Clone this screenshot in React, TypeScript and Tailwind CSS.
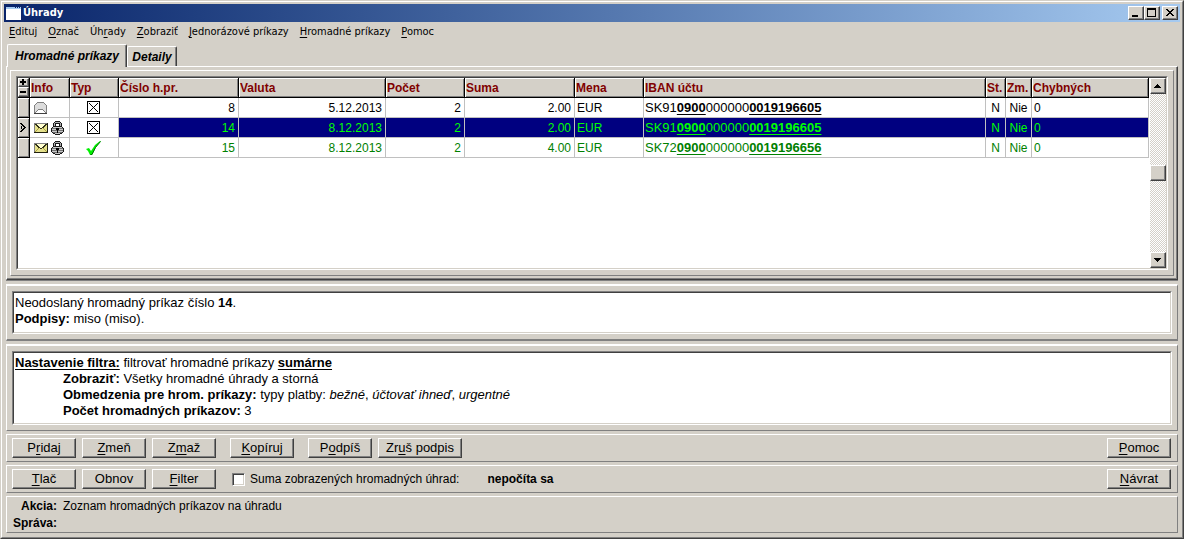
import type { ReactNode } from "react";

type PaymentRow = {
  id: number;
  state: "open" | "closed";
  type: "crossed" | "checked";
  date: string;
  count: number;
  amount: string;
  currency: string;
  iban: [string, string, string, string];
  status: string;
  changed: string;
  errors: number;
};

const ROWS: PaymentRow[] = [
  {
    id: 8,
    state: "open",
    type: "crossed",
    date: "5.12.2013",
    count: 2,
    amount: "2.00",
    currency: "EUR",
    iban: ["SK91", "0900", "000000", "0019196605"],
    status: "N",
    changed: "Nie",
    errors: 0,
  },
  {
    id: 14,
    state: "closed",
    type: "crossed",
    date: "8.12.2013",
    count: 2,
    amount: "2.00",
    currency: "EUR",
    iban: ["SK91", "0900", "000000", "0019196605"],
    status: "N",
    changed: "Nie",
    errors: 0,
  },
  {
    id: 15,
    state: "closed",
    type: "checked",
    date: "8.12.2013",
    count: 2,
    amount: "4.00",
    currency: "EUR",
    iban: ["SK72", "0900", "000000", "0019196656"],
    status: "N",
    changed: "Nie",
    errors: 0,
  },
];

const SELECTED_ID = 14;

const COLUMNS = [
  { label: "Info", width: "w-10" },
  { label: "Typ", width: "w-[49px]" },
  { label: "Číslo h.pr.", width: "w-[120px]" },
  { label: "Valuta", width: "w-[147px]" },
  { label: "Počet", width: "w-[79px]" },
  { label: "Suma", width: "w-[110px]" },
  { label: "Mena", width: "w-[69px]" },
  { label: "IBAN účtu", width: "" },
  { label: "St.", width: "w-5" },
  { label: "Zm.", width: "w-[26px]" },
  { label: "Chybných", width: "w-[117px]" },
];

// "_" in front of a letter marks the access key
const MENU = [
  "_Edituj",
  "_Označ",
  "Úh_rady",
  "_Zobraziť",
  "_Jednorázové príkazy",
  "_Hromadné príkazy",
  "_Pomoc",
];

const RAISED =
  "border border-t-white border-l-white border-r-[#404040] border-b-[#404040] bg-[#d4d0c8] shadow-[inset_-1px_-1px_0_#808080]";

function AccessLabel({ text }: { text: string }) {
  const at = text.indexOf("_");
  if (at < 0) return <>{text}</>;

  return (
    <>
      {text.slice(0, at)}
      <u className="underline-offset-2">{text[at + 1]}</u>
      {text.slice(at + 2)}
    </>
  );
}

function PushButton({ text, width = "w-16" }: { text: string; width?: string }) {
  return (
    <button
      type="button"
      className={`h-5 shrink-0 whitespace-nowrap text-center leading-4 ${width} ${RAISED}`}
    >
      <AccessLabel text={text} />
    </button>
  );
}

function Panel({ className = "", children }: { className?: string; children: ReactNode }) {
  return (
    <section
      className={`border border-t-white border-l-white border-r-[#808080] border-b-[#808080] ${className}`}
    >
      {children}
    </section>
  );
}

function Sunken({ className = "", children }: { className?: string; children: ReactNode }) {
  return (
    <div className={`border border-t-[#808080] border-l-[#808080] border-r-white border-b-white ${className}`}>
      <div className="h-full border border-t-[#404040] border-l-[#404040] border-r-[#d4d0c8] border-b-[#d4d0c8] bg-white">
        {children}
      </div>
    </div>
  );
}

function OpenEnvelope() {
  return (
    <svg width="13" height="12" viewBox="0 0 13 12" shapeRendering="crispEdges" aria-hidden>
      <path d="M3 1h7v1h1v1h1v8H1V3h1V2h1z" fill="#dcdcdc" />
      <path
        d="M3 .5h7M2 1.5h1M10 1.5h1M1 2.5h1M11 2.5h1M.5 3v8M12.5 3v8M4 7.5h5M3 8.5h1M9 8.5h1M2 9.5h1M10 9.5h1M1 10.5h1M11 10.5h1"
        stroke="#808080"
      />
      <path d="M4 8h5v1h1v1h1v1H2v-1h1V9h1z" fill="#fff" />
      <path d="M0 11.5h13" stroke="#404040" />
    </svg>
  );
}

function ClosedEnvelope() {
  return (
    <svg width="14" height="10" viewBox="0 0 14 10" shapeRendering="crispEdges" aria-hidden>
      <path d="M0 0h14v10H0z" fill="#808080" />
      <path d="M1 1h12v8H1z" fill="#e4e08c" />
      <path d="M3 1h8v1h-1v1H9v1H8v1H6V4H5V3H4V2H3z" fill="#ffffd0" />
      <path
        d="M1 1.5h2M2 2.5h2M3 3.5h2M4 4.5h2M8 4.5h2M6 5.5h2M9 3.5h2M10 2.5h2M11 1.5h2"
        stroke="#303018"
      />
      <path d="M4 5.5h1M3 6.5h1M2 7.5h1M1 8.5h1M9 5.5h1M10 6.5h1M11 7.5h1M12 8.5h1" stroke="#a8a040" />
      <path d="M13.5 0v10M0 9.5h14" stroke="#202010" />
    </svg>
  );
}

function Padlock() {
  return (
    <svg width="13" height="14" viewBox="0 0 13 14" shapeRendering="crispEdges" aria-hidden>
      <path d="M4 0h5v1h1v1h1v4H8V3H5v3H2V2h1V1h1z" fill="#181818" />
      <path d="M4 1h5v1h1v4H9V2H4v4H3V2h1z" fill="#b0b0b0" />
      <path d="M2 5h9v1h1v1h1v4h-1v1h-1v1H9v1H4v-1H2v-1H1v-1H0V7h1V6h1z" fill="#181818" />
      <path d="M2 6h9v1h1v4h-1v1H9v1H4v-1H2v-1H1V7h1z" fill="#c8c8c8" />
      <path d="M1 7.5h11M1 9.5h11M2 11.5h9" stroke="#707070" />
      <path d="M5 7h3v2H7v3H6V9H5z" fill="#000" />
    </svg>
  );
}

function CrossedBox() {
  return (
    <svg width="13" height="13" viewBox="0 0 13 13" shapeRendering="crispEdges" aria-hidden>
      <path d="M.5.5h12v12H.5zM2 2l9 9M11 2l-9 9" fill="none" stroke="#000" />
    </svg>
  );
}

function GreenCheck() {
  return (
    <svg width="15" height="14" viewBox="0 0 15 14" aria-hidden>
      <path d="M0 8l3-1 2 3 4-6 5-4h1l-5 6-4 8H4L2 10z" fill="#00f000" />
      <path d="M14.5.5l-5 6L6 13.5H4.5" fill="none" stroke="#007000" />
    </svg>
  );
}

function TitleBar() {
  return (
    <header className="flex h-[18px] items-center bg-linear-to-r from-[#0a246a] to-[#a6caf0] px-0.5">
      <svg width="15" height="13" viewBox="0 0 15 13" shapeRendering="crispEdges" aria-hidden>
        <path d="M0 0h15v13H0z" fill="#a6caf0" />
        <path d="M0 2h15v11H0z" fill="#fff" />
        <path d="M9 0h1v1H9zM11 0h1v1h-1zM13 0h1v1h-1z" fill="#0a246a" />
      </svg>
      <h1 className="ml-0.5 flex-1 font-['DejaVu_Sans_Condensed',sans-serif] text-[11px] leading-4 font-bold text-white">
        Úhrady
      </h1>
      <div className="flex">
        <button type="button" aria-label="Minimalizovať" className={`h-3.5 w-4 ${RAISED}`}>
          <svg width="14" height="12" viewBox="0 0 14 12" aria-hidden>
            <path d="M3 8h6v2H3z" />
          </svg>
        </button>
        <button type="button" aria-label="Maximalizovať" className={`h-3.5 w-4 ${RAISED}`}>
          <svg width="14" height="12" viewBox="0 0 14 12" aria-hidden>
            <path d="M2 1h9v9H2zM3 3v6h7V3z" fillRule="evenodd" />
          </svg>
        </button>
        <button type="button" aria-label="Zavrieť" className={`ml-0.5 h-3.5 w-4 ${RAISED}`}>
          <svg width="14" height="12" viewBox="0 0 14 12" shapeRendering="crispEdges" aria-hidden>
            <path d="M3 2h2v1h1v1h2V3h1V2h2v1h-1v1H9v1H8v1h1v1h1v1h1v1H9V8H8V7H6v1H5v1H3V8h1V7h1V6h1V5H5V4H4V3H3z" />
          </svg>
        </button>
      </div>
    </header>
  );
}

function TypeIcon({ type }: { type: PaymentRow["type"] }) {
  return type === "checked" ? <GreenCheck /> : <CrossedBox />;
}

function PaymentsTable() {
  return (
    <table className="w-full table-fixed border-separate border-spacing-0 text-[12px] leading-4">
      <thead>
        <tr className="h-5">
          <th className="w-3 border-r border-b border-black bg-[#d4d0c8] p-0">
            <button type="button" aria-label="Pridať stĺpec" className={`block h-[9px] w-[11px] ${RAISED}`}>
              <svg width="9" height="7" viewBox="0 0 9 7" className="block" aria-hidden>
                <path d="M1 2h6v2H1zM3 0h2v6H3z" />
              </svg>
            </button>
            <button type="button" aria-label="Odobrať stĺpec" className={`block h-2.5 w-[11px] ${RAISED}`}>
              <svg width="9" height="8" viewBox="0 0 9 8" className="block" aria-hidden>
                <path d="M1 3h6v2H1z" />
              </svg>
            </button>
          </th>
          {COLUMNS.map((column) => (
            <th
              key={column.label}
              className={`overflow-hidden border-r border-b border-black bg-[#d4d0c8] p-0 pl-px text-left font-bold whitespace-nowrap text-[#800000] shadow-[inset_1px_1px_0_#fff,inset_-1px_-1px_0_#808080] ${column.width}`}
            >
              {column.label}
            </th>
          ))}
        </tr>
      </thead>
      <tbody>
        {ROWS.map((row) => {
          const isSelected = row.id === SELECTED_ID;
          const tone = isSelected
            ? "bg-[#000080] text-[#00ff00]"
            : row.state === "closed"
              ? "text-[#008000]"
              : "text-black";
          const cell = `border-r border-b border-[#c0c0c0] p-0 whitespace-nowrap ${tone}`;
          const iconCell = "border-r border-b border-[#c0c0c0] p-0";

          return (
            <tr key={row.id} className="h-5" aria-selected={isSelected}>
              <th className="border-r border-b border-black bg-[#d4d0c8] p-0 shadow-[inset_1px_1px_0_#fff,inset_-1px_-1px_0_#808080]">
                {isSelected && (
                  <svg width="11" height="9" viewBox="0 0 11 9" className="block" shapeRendering="crispEdges" aria-hidden>
                    <path d="M2 0h2v1h1v1h1v1h1v1h1v1H7v1H6v1H5v1H4v1H2V8h1V7h1V6h1V5h1V4H5V3H4V2H3V1H2zM3 3h1v3H3z" />
                  </svg>
                )}
              </th>
              <td className={iconCell}>
                <div className="flex items-center gap-[3px] pl-1">
                  {row.state === "open" ? (
                    <OpenEnvelope />
                  ) : (
                    <>
                      <ClosedEnvelope />
                      <Padlock />
                    </>
                  )}
                </div>
              </td>
              <td className={iconCell}>
                <div className="flex justify-center pr-0.5">
                  <TypeIcon type={row.type} />
                </div>
              </td>
              <td className={`${cell} text-right`}>
                <span className="pr-[3px]">{row.id}</span>
              </td>
              <td className={`${cell} text-right`}>
                <span className="pr-[3px]">{row.date}</span>
              </td>
              <td className={`${cell} text-right`}>
                <span className="pr-[3px]">{row.count}</span>
              </td>
              <td className={`${cell} text-right`}>
                <span className="pr-[3px]">{row.amount}</span>
              </td>
              <td className={cell}>
                <span className="pl-0.5">{row.currency}</span>
              </td>
              <td className={`${cell} text-[13px]`}>
                <span className="pl-px">
                  {row.iban[0]}
                  <b className="underline underline-offset-2">{row.iban[1]}</b>
                  {row.iban[2]}
                  <b className="underline underline-offset-2">{row.iban[3]}</b>
                </span>
              </td>
              <td className={`${cell} text-center`}>{row.status}</td>
              <td className={`${cell} text-center`}>{row.changed}</td>
              <td className={cell}>
                <span className="pl-0.5">{row.errors}</span>
              </td>
            </tr>
          );
        })}
      </tbody>
    </table>
  );
}

function ScrollBar() {
  return (
    <div className="flex w-4 shrink-0 flex-col bg-[repeating-conic-gradient(#d4d0c8_0_25%,#fff_0_50%)] bg-[length:2px_2px]">
      <button type="button" aria-label="Nahor" className={`h-4 w-4 ${RAISED}`}>
        <svg width="14" height="14" viewBox="0 0 14 14" className="block" shapeRendering="crispEdges" aria-hidden>
          <path d="M6 5h1v1h1v1h1v1h1v1H3V8h1V7h1V6h1z" />
        </svg>
      </button>
      <div className="flex-1" />
      <div className={`h-4 w-4 ${RAISED}`} />
      <div className="h-[71px]" />
      <button type="button" aria-label="Nadol" className={`h-4 w-4 ${RAISED}`}>
        <svg width="14" height="14" viewBox="0 0 14 14" className="block" shapeRendering="crispEdges" aria-hidden>
          <path d="M3 5h7v1H9v1H8v1H7v1H6V8H5V7H4V6H3z" />
        </svg>
      </button>
    </div>
  );
}

export default function App() {
  return (
    <div className="border border-t-[#d4d0c8] border-l-[#d4d0c8] border-r-[#404040] border-b-[#404040] bg-[#d4d0c8] font-['Liberation_Sans',Arial,sans-serif] text-[12px] leading-4 text-black">
      <div className="border border-t-white border-l-white border-r-[#808080] border-b-[#808080] px-0.5 pt-0.5 pb-1">
        <TitleBar />

        <nav className="flex h-5 items-center gap-[11px] px-[5px] font-['DejaVu_Sans_Condensed',sans-serif] text-[11px]">
          {MENU.map((item) => (
            <button key={item} type="button" className="whitespace-nowrap">
              <AccessLabel text={item} />
            </button>
          ))}
        </nav>

        <main className="px-0.5 pt-0.5">
          <div role="tablist" className="flex items-end pl-px text-[12px] font-bold italic">
            <button
              type="button"
              role="tab"
              aria-selected="true"
              className="relative -mb-px h-[23px] w-[120px] rounded-t-xs border border-b-0 border-t-white border-l-white border-r-[#404040] bg-[#d4d0c8] whitespace-nowrap shadow-[inset_-1px_0_0_#808080]"
            >
              Hromadné príkazy
            </button>
            <button
              type="button"
              role="tab"
              aria-selected="false"
              className="h-5 w-[50px] rounded-t-xs border border-b-0 border-t-white border-l-white border-r-[#404040] whitespace-nowrap shadow-[inset_-1px_0_0_#808080]"
            >
              Detaily
            </button>
          </div>

          <div
            role="tabpanel"
            className="border border-t-white border-l-white border-r-[#404040] border-b-[#404040] shadow-[inset_-1px_-1px_0_#808080]"
          >
            <div className="p-[3px]">
              <Panel className="p-[5px]">
                <Sunken>
                  <div className="flex h-[190px]">
                    <div className="min-w-0 flex-1 pr-px">
                      <PaymentsTable />
                    </div>
                    <ScrollBar />
                  </div>
                </Sunken>
              </Panel>
            </div>
          </div>

          <div className="border-t border-[#808080] pt-[3px]">
            <Panel className="border-t-2 border-b-2 p-[5px] text-[13px]">
              <Sunken>
                <div className="h-[39px] px-px pt-0.5">
                  <p>
                    Neodoslaný hromadný príkaz číslo <b>14</b>.
                  </p>
                  <p>
                    <b>Podpisy:</b> miso (miso).
                  </p>
                </div>
              </Sunken>
            </Panel>
          </div>

          <Panel className="mt-[3px] border-t-2 p-[5px] text-[13px]">
            <Sunken>
              <div className="h-[70px] px-px pt-0.5">
                <p>
                  <b className="underline underline-offset-2">Nastavenie filtra:</b> filtrovať hromadné príkazy{" "}
                  <b className="underline underline-offset-2">sumárne</b>
                </p>
                <div className="pl-12">
                  <p>
                    <b>Zobraziť:</b> Všetky hromadné úhrady a storná
                  </p>
                  <p>
                    <b>Obmedzenia pre hrom. príkazy:</b> typy platby: <i>bežné</i>, <i>účtovať ihneď</i>,{" "}
                    <i>urgentné</i>
                  </p>
                  <p>
                    <b>Počet hromadných príkazov:</b> 3
                  </p>
                </div>
              </div>
            </Sunken>
          </Panel>

          <Panel className="mt-[3px] flex items-center py-[3px] pr-1.5 pl-[5px] text-[13px]">
            <div className="flex gap-1.5">
              <PushButton text="P_ridaj" />
              <PushButton text="_Zmeň" />
              <PushButton text="Z_maž" />
            </div>
            <div className="ml-3.5">
              <PushButton text="_Kopíruj" />
            </div>
            <div className="ml-3.5 flex gap-1.5">
              <PushButton text="P_odpíš" />
              <PushButton text="Zr_uš podpis" width="w-[84px]" />
            </div>
            <div className="ml-auto">
              <PushButton text="_Pomoc" />
            </div>
          </Panel>

          <Panel className="mt-[3px] flex items-center py-[3px] pr-1.5 pl-[5px] text-[13px]">
            <div className="flex gap-1.5">
              <PushButton text="_Tlač" />
              <PushButton text="Obnov" />
              <PushButton text="_Filter" />
            </div>
            <label className="ml-4 flex items-center gap-[5px] text-[12px]">
              <input
                type="checkbox"
                className="h-[13px] w-[13px] appearance-none border border-t-[#808080] border-l-[#808080] border-r-white border-b-white bg-white shadow-[inset_1px_1px_0_#404040,inset_-1px_-1px_0_#d4d0c8]"
              />
              Suma zobrazených hromadných úhrad:
            </label>
            <b className="ml-7 text-[12px]">nepočíta sa</b>
            <div className="ml-auto">
              <PushButton text="_Návrat" />
            </div>
          </Panel>

          <Panel className="mt-[3px] px-[5px] pt-px text-[12px]">
            <dl className="grid grid-cols-[45px_1fr] gap-x-1.5 leading-[17px]">
              <dt className="text-right font-bold">Akcia:</dt>
              <dd>Zoznam hromadných príkazov na úhradu</dd>
              <dt className="text-right font-bold">Správa:</dt>
              <dd />
            </dl>
          </Panel>
        </main>
      </div>
    </div>
  );
}
